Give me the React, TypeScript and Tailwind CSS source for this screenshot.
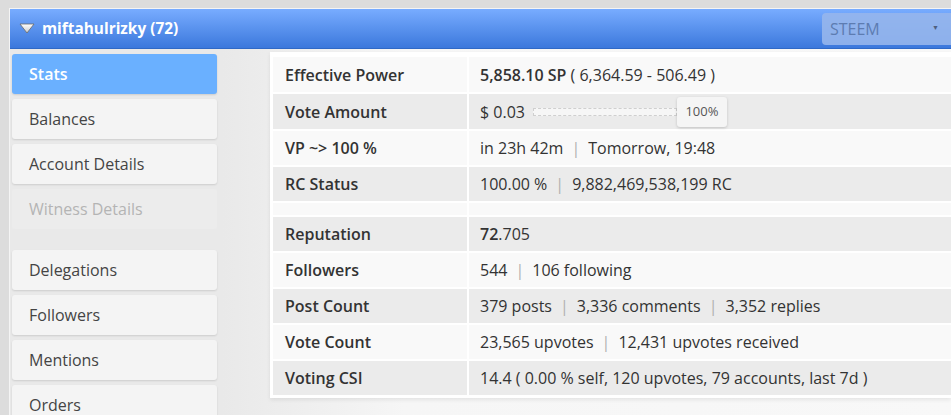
import React from 'react';

const menu = [
  { label: 'Stats', active: true },
  { label: 'Balances' },
  { label: 'Account Details' },
  { label: 'Witness Details', disabled: true },
  { sep: true },
  { label: 'Delegations' },
  { label: 'Followers' },
  { label: 'Mentions' },
  { label: 'Orders' },
];

const Bar = () => <span className="mx-[8px] text-[#b0b0b0]">|</span>;

export default function App() {
  const rows: { label?: string; value?: React.ReactNode; spacer?: boolean; tall?: boolean }[] = [
    {
      label: 'Effective Power',
      tall: true,
      value: (
        <>
          <b className="font-semibold">5,858.10 SP</b>&nbsp;( 6,364.59 - 506.49 )
        </>
      ),
    },
    {
      label: 'Vote Amount',
      tall: true,
      value: (
        <div className="flex items-center">
          <span>$ 0.03</span>
          <div className="ml-[8px] h-[8px] w-[144px] border border-dashed border-[#cfcfcf] bg-[#f6f6f6]" />
          <div className="flex h-[30px] w-[50px] items-center justify-center rounded-[3px] bg-[#f5f5f5] text-[13px] text-[#555] shadow-[0_1px_3px_rgba(0,0,0,0.18)]">
            100%
          </div>
        </div>
      ),
    },
    {
      label: 'VP ~> 100 %',
      value: (
        <>
          in 23h 42m
          <Bar />
          Tomorrow, 19:48
        </>
      ),
    },
    {
      label: 'RC Status',
      value: (
        <>
          100.00 %
          <Bar />
          9,882,469,538,199 RC
        </>
      ),
    },
    { spacer: true },
    {
      label: 'Reputation',
      value: (
        <>
          <b className="font-semibold">72</b>.705
        </>
      ),
    },
    {
      label: 'Followers',
      value: (
        <>
          544
          <Bar />
          106 following
        </>
      ),
    },
    {
      label: 'Post Count',
      value: (
        <>
          379 posts
          <Bar />
          3,336 comments
          <Bar />
          3,352 replies
        </>
      ),
    },
    {
      label: 'Vote Count',
      value: (
        <>
          23,565 upvotes
          <Bar />
          12,431 upvotes received
        </>
      ),
    },
    {
      label: 'Voting CSI',
      value: <>14.4 ( 0.00 % self, 120 upvotes, 79 accounts, last 7d )</>,
    },
  ];

  return (
    <div
      className="h-[415px] w-[951px] overflow-hidden bg-[#dcdcdc] pl-[9px] pt-[8px]"
      style={{ fontFamily: '"Open Sans", "Liberation Sans", sans-serif' }}
    >
      <div className="h-full border-l border-t border-[#f4f4f4] bg-[#e9e9e9]">
        {/* header */}
        <div className="flex h-[40px] items-center border-b border-[#2f69c6] bg-gradient-to-b from-[#78acff] to-[#3b78dc]">
          <svg width="16" height="11" viewBox="0 0 16 11" className="ml-[9px]">
            <defs>
              <linearGradient id="tri" x1="0" y1="0" x2="0" y2="1">
                <stop offset="0" stopColor="#ffffff" />
                <stop offset="1" stopColor="#c9c9c9" />
              </linearGradient>
            </defs>
            <polygon points="1,1 15,1 8,10" fill="url(#tri)" stroke="#6a6a6a" strokeWidth="0.8" strokeLinejoin="round" />
          </svg>
          <span className="ml-[7px] text-[15.4px] font-bold text-white">miftahulrizky (72)</span>
          <div className="ml-auto flex h-[32px] w-[129px] items-center justify-between rounded-l-[4px] bg-[#96b6ec]/90 pl-[8px] pr-[12px]">
            <span className="text-[16px] text-[#5d7cb1]">STEEM</span>
            <span className="text-[7px] text-[#4e5f7f]">▼</span>
          </div>
        </div>

        <div className="flex h-full">
          {/* sidebar */}
          <div className="flex w-[212px] shrink-0 flex-col gap-[5px] bg-[#e9e9e9] pl-[2px] pt-[5px]">
            {menu.map((m, i) =>
              m.sep ? (
                <div key={i} className="h-[11px]" />
              ) : (
                <div
                  key={i}
                  className={
                    m.active
                      ? 'flex h-[40px] w-[205px] shrink-0 items-center rounded-[3px] bg-[#6ab0ff] pl-[17px] text-[16px] font-semibold text-white shadow-[0_1px_2px_rgba(0,0,0,0.12)]'
                      : m.disabled
                      ? 'flex h-[40px] w-[205px] shrink-0 items-center rounded-[3px] bg-[#ececec] pl-[17px] text-[16px] text-[#b4b4b4]'
                      : 'flex h-[40px] w-[205px] shrink-0 items-center rounded-[3px] bg-[#f4f4f4] pl-[17px] text-[16px] text-[#444] shadow-[0_1px_2px_rgba(0,0,0,0.12)]'
                  }
                >
                  {m.label}
                </div>
              )
            )}
          </div>

          {/* content */}
          <div className="flex-1 bg-gradient-to-r from-[#e9e9e9] via-[#f6f6f6] via-[25%] to-[#f8f8f8] pl-[48px] pt-[3px]">
            <div className="bg-white p-[3px] pt-[5px] pr-0 shadow-[0_2px_4px_rgba(0,0,0,0.08)]">
              <div className="flex flex-col gap-[2px] text-[16px] text-[#333]">
                {rows.map((r, i) => {
                  const bg = i % 2 === 0 ? 'bg-[#f9f9f9]' : 'bg-[#ebebeb]';
                  const h = r.spacer ? 'h-[12px]' : r.tall ? 'h-[35px]' : 'h-[34px]';
                  return (
                    <div key={i} className={`flex gap-[2px] ${h}`}>
                      <div className={`flex w-[194px] shrink-0 items-center pl-[12px] font-semibold text-[#333] ${bg}`}>
                        {r.label}
                      </div>
                      <div className={`flex flex-1 items-center whitespace-nowrap pl-[11px] ${bg}`}>{r.value}</div>
                    </div>
                  );
                })}
              </div>
            </div>
          </div>
        </div>
      </div>
    </div>
  );
}
